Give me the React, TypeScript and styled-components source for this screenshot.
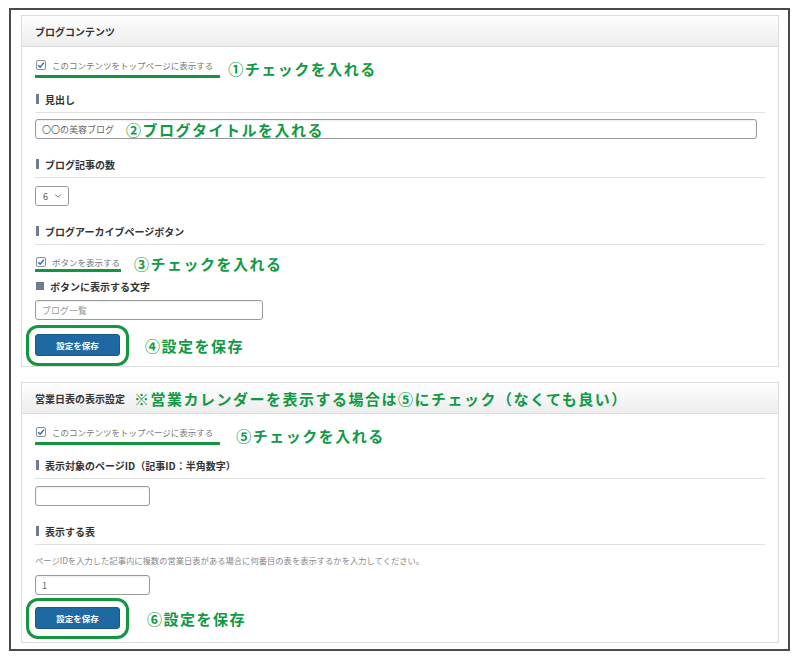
import React from 'react'
import styled, { createGlobalStyle } from 'styled-components'
import { ChevronDown } from 'lucide-react'

const GlobalStyle = createGlobalStyle`
  html, body {
    margin: 0;
    padding: 0;
    background: #fff;
  }
  body {
    font-family: "Noto Sans CJK JP", "Noto Sans", sans-serif;
    color: #333;
  }
`

const green = '#0f9a45'

const Frame = styled.div`
  box-sizing: border-box;
  width: 781px;
  margin: 8px 0 0 9px;
  border: 2px solid #4a4a4a;
  padding: 5px 9px 6px 10px;
  display: flex;
  flex-direction: column;
  gap: 15px;
`

const Panel = styled.section`
  border: 1px solid #dcdcdc;
  background: #fff;
`

const PanelHeader = styled.div`
  height: 30px;
  display: flex;
  align-items: center;
  gap: 9px;
  padding: 0 13px;
  background: linear-gradient(#fefefe, #ededed);
  border-bottom: 1px solid #dcdcdc;
`

const PanelTitle = styled.h2`
  margin: 0;
  font-size: 10px;
  font-weight: 700;
  color: #333;
  white-space: nowrap;
`

const PanelBody = styled.div<{ $bottom: number }>`
  padding: 0 13px ${props => props.$bottom}px;
  display: flex;
  flex-direction: column;
  align-items: flex-start;
`

const Note = styled.span`
  font-size: 15px;
  font-weight: 700;
  line-height: 1;
  color: ${green};
  letter-spacing: 1.5px;
  white-space: nowrap;
`

const CheckRow = styled.div<{ $gap: number; $top: number }>`
  display: flex;
  align-items: center;
  gap: ${props => props.$gap}px;
  margin-top: ${props => props.$top}px;
`

const CheckLabel = styled.label<{ $padRight: number; $padBottom: number }>`
  display: inline-flex;
  align-items: center;
  gap: 6px;
  height: 14px;
  padding: 0 ${props => props.$padRight}px ${props => props.$padBottom}px 1px;
  border-bottom: 3px solid #12963f;
  font-size: 8.5px;
  color: #777;
  white-space: nowrap;
`

const CheckBox = styled.span`
  box-sizing: border-box;
  width: 10px;
  height: 10px;
  border: 1px solid #8c8f94;
  border-radius: 2px;
  background: #fff;
  display: inline-flex;
  align-items: center;
  justify-content: center;

  svg {
    display: block;
  }
`

const Heading = styled.h3<{ $top: number }>`
  align-self: stretch;
  margin: ${props => props.$top}px 0 0;
  height: 14px;
  padding-bottom: 6px;
  border-bottom: 1px solid #e1e1e1;
  display: flex;
  align-items: center;
  font-size: 10px;
  font-weight: 700;
  color: #333;

  &::before {
    content: '';
    width: 3px;
    height: 10px;
    background: #6f7b93;
    margin: 0 6px 0 1px;
  }
`

const SubHeading = styled.h4<{ $top: number }>`
  margin: ${props => props.$top}px 0 0;
  height: 14px;
  display: flex;
  align-items: center;
  font-size: 10px;
  font-weight: 700;
  color: #333;

  &::before {
    content: '';
    width: 8px;
    height: 8px;
    background: #6f7b93;
    margin: 0 6px 0 1px;
  }
`

const InputWrap = styled.div<{ $top: number }>`
  position: relative;
  margin-top: ${props => props.$top}px;
`

const TextInput = styled.input<{ $width: number }>`
  box-sizing: border-box;
  display: block;
  width: ${props => props.$width}px;
  height: 20px;
  margin: 0;
  padding: 0 6px;
  border: 1px solid #9a9a9a;
  border-radius: 3px;
  background: #fff;
  font-family: inherit;
  font-size: 9px;
  color: #666;
  box-shadow: inset 0 1px 2px rgba(0, 0, 0, 0.07);
  outline: none;

  &::placeholder {
    color: #999;
  }
`

const InputNote = styled(Note)`
  position: absolute;
  left: 91px;
  top: 50%;
  transform: translateY(-50%);
`

const SelectBox = styled.div<{ $top: number }>`
  box-sizing: border-box;
  margin-top: ${props => props.$top}px;
  width: 34px;
  height: 20px;
  padding: 0 5px 0 7px;
  border: 1px solid #9a9a9a;
  border-radius: 3px;
  display: flex;
  align-items: center;
  justify-content: space-between;
  font-size: 9px;
  color: #555;
`

const Description = styled.p<{ $top: number }>`
  margin: ${props => props.$top}px 0 0;
  line-height: 14px;
  font-size: 8.3px;
  color: #888;
  white-space: nowrap;
`

const ButtonRow = styled.div<{ $top: number; $gap: number }>`
  display: flex;
  align-items: center;
  gap: ${props => props.$gap}px;
  margin-top: ${props => props.$top}px;
`

const SaveButton = styled.button`
  position: relative;
  box-sizing: border-box;
  width: 85px;
  height: 22px;
  margin: 0;
  padding: 0;
  border: 1px solid #175a8c;
  border-radius: 3px;
  background: #1f69a3;
  color: #fff;
  font-family: inherit;
  font-size: 8.5px;
  font-weight: 700;
  cursor: pointer;

  &::after {
    content: '';
    position: absolute;
    inset: -10px -10px -11px -10px;
    border: 3px solid #12963f;
    border-radius: 12px;
    pointer-events: none;
  }
`

const Check = () => (
  <CheckBox>
    <svg width="8" height="8" viewBox="0 0 8 8">
      <polyline points="1.2,4.2 3.2,6.2 6.9,1.6" fill="none" stroke="#2c6fb0" strokeWidth="1.5" />
    </svg>
  </CheckBox>
)

const App = () => {
  return (
    <>
      <GlobalStyle />
      <Frame>
        <Panel>
          <PanelHeader>
            <PanelTitle>ブログコンテンツ</PanelTitle>
          </PanelHeader>
          <PanelBody $bottom={10}>
            <CheckRow $top={11} $gap={8}>
              <CheckLabel $padRight={7} $padBottom={3}>
                <Check />
                このコンテンツをトップページに表示する
              </CheckLabel>
              <Note>①チェックを入れる</Note>
            </CheckRow>

            <Heading $top={14}>見出し</Heading>
            <InputWrap $top={6}>
              <TextInput $width={722} readOnly defaultValue="〇〇の美容ブログ" />
              <InputNote>②ブログタイトルを入れる</InputNote>
            </InputWrap>

            <Heading $top={18}>ブログ記事の数</Heading>
            <SelectBox $top={8}>
              6
              <ChevronDown size={10} strokeWidth={2} color="#555" />
            </SelectBox>

            <Heading $top={18}>ブログアーカイブページボタン</Heading>
            <CheckRow $top={10} $gap={13}>
              <CheckLabel $padRight={1} $padBottom={0}>
                <Check />
                ボタンを表示する
              </CheckLabel>
              <Note>③チェックを入れる</Note>
            </CheckRow>

            <SubHeading $top={7}>ボタンに表示する文字</SubHeading>
            <InputWrap $top={7}>
              <TextInput $width={228} readOnly placeholder="ブログ一覧" />
            </InputWrap>

            <ButtonRow $top={14} $gap={25}>
              <SaveButton type="button">設定を保存</SaveButton>
              <Note>④設定を保存</Note>
            </ButtonRow>
          </PanelBody>
        </Panel>

        <Panel>
          <PanelHeader>
            <PanelTitle>営業日表の表示設定</PanelTitle>
            <Note>※営業カレンダーを表示する場合は⑤にチェック（なくても良い）</Note>
          </PanelHeader>
          <PanelBody $bottom={13}>
            <CheckRow $top={11} $gap={16}>
              <CheckLabel $padRight={7} $padBottom={3}>
                <Check />
                このコンテンツをトップページに表示する
              </CheckLabel>
              <Note>⑤チェックを入れる</Note>
            </CheckRow>

            <Heading $top={13}>表示対象のページID（記事ID：半角数字）</Heading>
            <InputWrap $top={7}>
              <TextInput $width={115} readOnly defaultValue="" />
            </InputWrap>

            <Heading $top={18}>表示する表</Heading>
            <Description $top={8}>
              ページIDを入力した記事内に複数の営業日表がある場合に何番目の表を表示するかを入力してください。
            </Description>
            <InputWrap $top={8}>
              <TextInput $width={115} readOnly defaultValue="1" />
            </InputWrap>

            <ButtonRow $top={12} $gap={27}>
              <SaveButton type="button">設定を保存</SaveButton>
              <Note>⑥設定を保存</Note>
            </ButtonRow>
          </PanelBody>
        </Panel>
      </Frame>
    </>
  )
}

export default App
